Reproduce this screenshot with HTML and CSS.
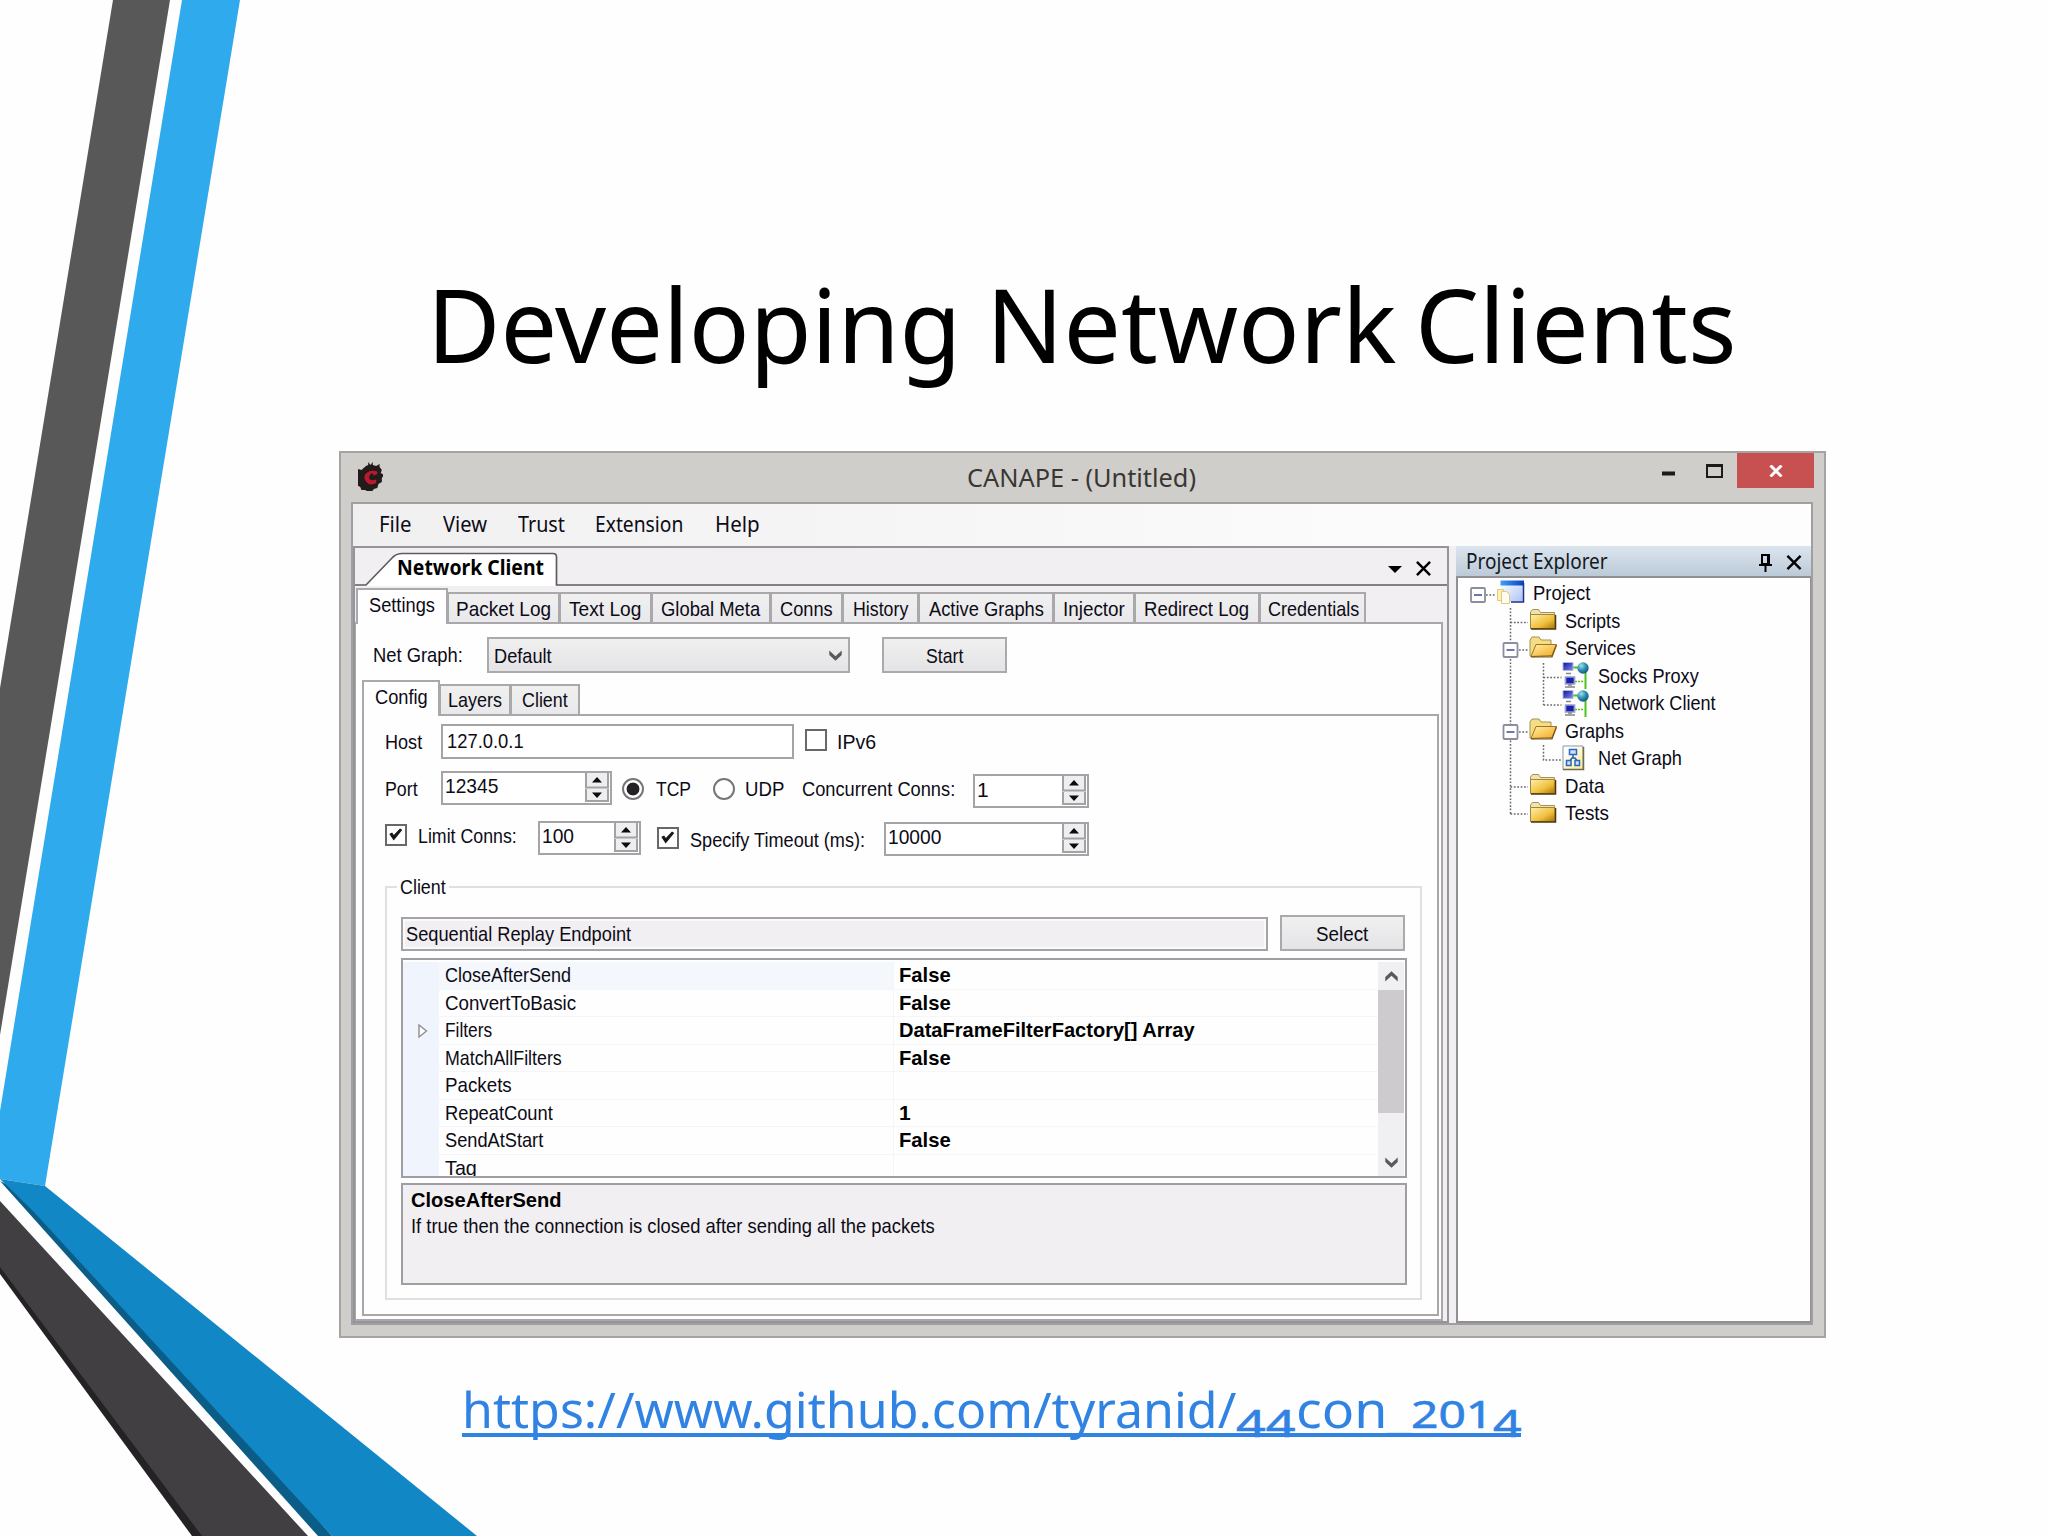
FILE: index.html
```html
<!DOCTYPE html>
<html lang="en">
<head>
<meta charset="utf-8">
<title>Developing Network Clients</title>
<link rel="stylesheet" href="styles.css">
</head>
<body>
<svg class="symbols" width="0" height="0">
  <defs>
    <linearGradient id="gold" x1="0" y1="0" x2="1" y2="1"><stop offset="0" stop-color="#fff0b0"/><stop offset=".6" stop-color="#efbf3c"/><stop offset="1" stop-color="#a8740c"/></linearGradient>
    <linearGradient id="flap" x1="0" y1="0" x2="1" y2="1"><stop offset="0" stop-color="#fff0a8"/><stop offset="1" stop-color="#f3a81c"/></linearGradient>
    <linearGradient id="sky" x1="0" y1="0" x2="1" y2="1"><stop offset="0" stop-color="#fff"/><stop offset="1" stop-color="#a9c2f5"/></linearGradient>
    <linearGradient id="cream" x1="0" y1="0" x2="1" y2="1"><stop offset=".2" stop-color="#fff"/><stop offset="1" stop-color="#ffe98a"/></linearGradient>
    <linearGradient id="bar" x1="0" y1="0" x2="1" y2="0"><stop offset="0" stop-color="#3fa0f5"/><stop offset="1" stop-color="#0a3fc0"/></linearGradient>
    <radialGradient id="globe" cx=".35" cy=".3" r=".8"><stop offset="0" stop-color="#9fe0ea"/><stop offset=".5" stop-color="#2f8fae"/><stop offset="1" stop-color="#0b4a86"/></radialGradient>
    <linearGradient id="screen" x1="0" y1="0" x2="1" y2="1"><stop offset="0" stop-color="#0a10a0"/><stop offset="1" stop-color="#7f90f0"/></linearGradient>
  </defs>
  <symbol id="i-folder" viewBox="0 0 28 24"><path d="M1.500 21V4l2-2.500h6l2 3h14V7H1.500" fill="#efe3b0" stroke="#a49259"/><path d="M1.500 6.500H26v14H1.500z" fill="url(#gold)" stroke="#a8862f"/><path d="M2 21h24.500V7" fill="none" stroke="#4a360c" stroke-width="1.500"/></symbol>
  <symbol id="i-open" viewBox="0 0 28 24"><path d="M1 20V4l2-3h7l2 3h10v7L5 21z" fill="#f5dd83" stroke="#a49259"/><path d="M7 8.500H27.500L23 19.500 2 20.500z" fill="url(#flap)" stroke="#9a7427"/><path d="M2 20.800h21L27.500 9" fill="none" stroke="#7a5813" stroke-width="1.300"/></symbol>
  <symbol id="i-project" viewBox="0 0 28 25"><path d="M4.500 1.500h22v20h-22z" fill="url(#sky)"/><path d="M3.500.5H27v5H3.500z" fill="url(#bar)"/><path d="M26.500 3v19H14" fill="none" stroke="#1f2f8c" stroke-width="1.500"/><path d="M.5 9.500h6v11h-6z" fill="#fff1b4" stroke="#e2c980"/><path d="M4.500 11.500h5l3 3v9h-8z" fill="#fffdf0" stroke="#e2c980"/></symbol>
  <symbol id="i-net" viewBox="0 0 28 28"><path d="M11 6.500h12M23.500 6v22" stroke="#4cc417" stroke-width="2" fill="none"/><path d="M13 20.500h9" stroke="#4cc417" stroke-width="1.500" stroke-dasharray="2 1"/><path d="M1 1.500h10v8H1z" fill="url(#screen)" stroke="#b4b8dc"/><path d="M4 12.500h5" stroke="#888" stroke-width="1.500"/><path d="M3.500 16h9v7h-9z" fill="#1622b4" stroke="#9a9fc8" stroke-width="1.700"/><path d="M3 26h10M6 24h4" stroke="#858585" stroke-width="1.700"/><circle cx="21" cy="7" r="5.700" fill="url(#globe)"/></symbol>
  <symbol id="i-graph" viewBox="0 0 28 26"><path d="M1 1h20v23.500H1z" fill="url(#cream)" stroke="#8b97a8"/><path d="M1 24.500h20.500V2" fill="none" stroke="#6d6a4d" stroke-width="1.500"/><path d="M11 9v4M7 17l3-4h3l3 4" fill="none" stroke="#2a5fae" stroke-width="1.500"/><path d="M7.500 4.500h7v5h-7zM4.500 15.500h4.500v5H4.500zM13 15.500h4.500v5H13z" fill="#c9e0ff" stroke="#2a66c2" stroke-width="1.500"/></symbol>
  <symbol id="i-check" viewBox="0 0 22 22"><path d="M4.500 10l4 6L17 5.500l-1.500-1-7 7.500-2-3z" fill="#161616" stroke="#161616" stroke-width="1.200"/></symbol>
  <symbol id="i-down" viewBox="0 0 13 11"><path d="M.3.500l6.200 5.700L12.700.500V5l-6.200 5.800L.3 5z" fill="#5b595b"/></symbol>
  <symbol id="i-x" viewBox="0 0 16 16"><path d="M1 1l14 14M15 1L1 15" fill="none" stroke="currentColor" stroke-width="2.600"/></symbol>
  <symbol id="i-spin" viewBox="0 0 24 29"><path d="M0 0h24v29H0z" fill="#eeedef"/><path d="M1 0v28h22V0M1 14.500h22" fill="none" stroke="#a3a1a4" stroke-width="2"/><path d="M0 15.500h24" stroke="#c9c8ca"/><path d="M12 4l5 5.500H7zM12 25l5-5.500H7z" fill="#0c0c0c"/></symbol>
</svg>

<main class="slide">
  <svg class="ribbon" viewBox="0 0 480 1536" width="480" height="1536">
    <path d="M113 0h57L0 1035V688z" fill="#585858"/>
    <path d="M182 0h58L45 1186 0 1179v-68z" fill="#2fabed"/>
    <path d="M0 1181l40 20L332 1536h-14z" fill="#0b5d87"/>
    <path d="M0 1179l45 7 432 350H332L33 1211z" fill="#1287c5"/>
    <path d="M0 1265l60 60 145 211h-13L0 1274z" fill="#242224"/>
    <path d="M0 1201l308 335H202L0 1267z" fill="#413f41"/>
  </svg>

  <h1 class="title"><span class="t" data-w="534">Developing</span><span class="t" data-w="410">Network</span><span class="t" data-w="322">Clients</span></h1>

  <section class="window">
    <header class="titlebar">
      <svg class="logo" viewBox="1 0 22 29" width="25" height="29" preserveAspectRatio="none"><path d="M8 4l2-1V0l2 3 2-3v3l3 1 3-2v3l2 3-1 3 3 2-2 3v4l-3 2-1 4-3 1-2 3-4-1-2-1-3 0-1-3-3-2 1-3-3-2 2-3-2-3 3-2V7l3 1z" fill="#231b1b"/><path d="M18 12V9.500Q12 7.500 8.500 11t-.5 8.500 9 1.500v-3.500q-4 1.500-5.500 0t0-4.500 3-.5v1z" fill="#b81c2c"/></svg>
      <span class="caption"><span class="t" data-w="229">CANAPE - (Untitled)</span></span>
      <svg class="winbtn" viewBox="0 0 70 36" width="70" height="36"><path d="M1 20.500h13" stroke="#1c1b1a" stroke-width="4"/><path d="M46 12h15v12H46z" fill="none" stroke="#1c1b1a" stroke-width="2"/><path d="M45 12.500h17" stroke="#1c1b1a" stroke-width="3"/></svg>
      <span class="close"><svg viewBox="0 0 14 12" width="14" height="12"><path d="M1.500.500l11 11M12.500.500l-11 11" stroke="#fff" stroke-width="3"/></svg></span>
    </header>

    <div class="client">
      <nav class="menu">
        <span class="t" data-w="33">File</span><span class="t" data-w="44">View</span><span class="t" data-w="47">Trust</span><span class="t" data-w="88">Extension</span><span class="t" data-w="45">Help</span>
      </nav>
      <div class="panes">
        <section class="doc">
          <div class="docstrip">
            <svg class="doctab" viewBox="0 0 1092 38" width="1092" height="38"><path d="M10 38L38 9q4-3.500 9-3.500h151q3.500 0 3.500 3.500v29z" fill="#fff"/><path d="M0 37h11L38 9q4-3.500 9-3.500h151q3.500 0 3.500 3.500v28H1092" fill="none" stroke="#5f5c60" stroke-width="1.700"/></svg>
            <b class="doctitle"><span class="t" data-w="147">Network Client</span></b>
            <svg class="dropmark" viewBox="0 0 14 7" width="14" height="7"><path d="M0 0h14L7 7z" fill="#000"/></svg>
            <svg class="docx" width="15" height="15"><use href="#i-x"/></svg>
          </div>

          <div class="tabs main-tabs">
            <span class="tab on"><span class="t" data-w="66">Settings</span></span>
            <span class="tab"><span class="t" data-w="95">Packet Log</span></span>
            <span class="tab"><span class="t" data-w="72">Text Log</span></span>
            <span class="tab"><span class="t" data-w="99">Global Meta</span></span>
            <span class="tab"><span class="t" data-w="53">Conns</span></span>
            <span class="tab"><span class="t" data-w="55">History</span></span>
            <span class="tab"><span class="t" data-w="115">Active Graphs</span></span>
            <span class="tab"><span class="t" data-w="62">Injector</span></span>
            <span class="tab"><span class="t" data-w="105">Redirect Log</span></span>
            <span class="tab"><span class="t" data-w="91">Credentials</span></span>
          </div>

          <div class="page">
            <div class="graphrow">
              <span class="t" data-w="90">Net Graph:</span>
              <span class="combo"><span class="t" data-w="58">Default</span><svg width="13" height="11"><use href="#i-down"/></svg></span>
              <span class="button"><span class="t" data-w="37">Start</span></span>
            </div>

            <div class="tabs sub-tabs">
              <span class="tab on"><span class="t" data-w="53">Config</span></span>
              <span class="tab"><span class="t" data-w="54">Layers</span></span>
              <span class="tab"><span class="t" data-w="46">Client</span></span>
            </div>

            <div class="config">
              <div class="hostrow">
                <span class="t" data-w="37">Host</span>
                <span class="field"><span class="t" data-w="77">127.0.0.1</span></span>
                <span class="check"></span>
                <span class="t" data-w="39">IPv6</span>
              </div>
              <div class="portrow">
                <span class="t" data-w="33">Port</span>
                <span class="field spin"><span class="t" data-w="53">12345</span><svg width="24" height="29"><use href="#i-spin"/></svg></span>
                <span class="radio picked"></span>
                <span class="t" data-w="35">TCP</span>
                <span class="radio"></span>
                <span class="t" data-w="39">UDP</span>
                <span class="t" data-w="153">Concurrent Conns:</span>
                <span class="field spin low"><span class="t">1</span><svg width="24" height="29"><use href="#i-spin"/></svg></span>
              </div>
              <div class="limitrow">
                <span class="check"><svg width="20" height="20"><use href="#i-check"/></svg></span>
                <span class="t" data-w="99">Limit Conns:</span>
                <span class="field spin"><span class="t" data-w="32">100</span><svg width="24" height="29"><use href="#i-spin"/></svg></span>
                <span class="check second"><svg width="20" height="20"><use href="#i-check"/></svg></span>
                <span class="t second" data-w="175">Specify Timeout (ms):</span>
                <span class="field spin timeout"><span class="t" data-w="53">10000</span><svg width="24" height="29"><use href="#i-spin"/></svg></span>
              </div>

              <fieldset class="group">
                <legend><span class="t" data-w="46">Client</span></legend>
                <div class="endpoint">
                  <span class="field readonly"><span class="t" data-w="225">Sequential Replay Endpoint</span></span>
                  <span class="button"><span class="t" data-w="52">Select</span></span>
                </div>
                <div class="props">
                  <div class="rows">
                    <div class="prop sel"><i></i><span><span class="t" data-w="126">CloseAfterSend</span></span><b><span class="t" data-w="52">False</span></b></div>
                    <div class="prop"><i></i><span><span class="t" data-w="131">ConvertToBasic</span></span><b><span class="t" data-w="52">False</span></b></div>
                    <div class="prop"><i><svg width="10" height="14" viewBox="0 0 10 14"><path d="M1 1l7.500 6L1 13z" fill="#fff" stroke="#8e8e90" stroke-width="1.400"/></svg></i><span><span class="t" data-w="47">Filters</span></span><b><span class="t" data-w="296">DataFrameFilterFactory[] Array</span></b></div>
                    <div class="prop"><i></i><span><span class="t" data-w="117">MatchAllFilters</span></span><b><span class="t" data-w="52">False</span></b></div>
                    <div class="prop"><i></i><span><span class="t" data-w="67">Packets</span></span><b></b></div>
                    <div class="prop"><i></i><span><span class="t" data-w="108">RepeatCount</span></span><b><span class="t">1</span></b></div>
                    <div class="prop"><i></i><span><span class="t" data-w="98">SendAtStart</span></span><b><span class="t" data-w="52">False</span></b></div>
                    <div class="prop"><i></i><span><span class="t" data-w="32">Tag</span></span><b></b></div>
                  </div>
                  <div class="scroll">
                    <svg class="flip" width="13" height="11"><use href="#i-down"/></svg>
                    <span class="thumb"></span>
                    <svg width="13" height="11"><use href="#i-down"/></svg>
                  </div>
                </div>
                <div class="help">
                  <b><span class="t" data-w="151">CloseAfterSend</span></b>
                  <span class="t" data-w="524">If true then the connection is closed after sending all the packets</span>
                </div>
              </fieldset>
            </div>
          </div>
        </section>

        <aside class="explorer">
          <header class="exhead">
            <span class="t" data-w="142">Project Explorer</span>
            <svg class="pin" viewBox="0 0 13 18" width="13" height="18"><path d="M3 1h7v9H3z" fill="none" stroke="#000" stroke-width="2"/><path d="M8 0h3v10H8z"/><path d="M0 10h13v2H0zM5.500 12h2v6h-2z"/></svg>
            <svg width="16" height="15"><use href="#i-x"/></svg>
          </header>
          <div class="tree">
            <svg class="lines" width="120" height="250" viewBox="0 0 120 250"><g fill="none" stroke="#66646c" stroke-width="1.500" stroke-dasharray="1.700 1.700"><path d="M29 17h10M53.500 30v206M53.500 44.500H71M62 72h9M53.500 209H71M53.500 236H71M86.500 85v42M86.500 99.500h18M86.500 127h18M62 154h9M86.500 167v15h18"/></g><g fill="#fff" stroke="#8b8e9c" stroke-width="1.800"><rect x="14" y="10" width="14" height="14" rx="1"/><rect x="46.500" y="65" width="14" height="14" rx="1"/><rect x="46.500" y="147" width="14" height="14" rx="1"/></g><path d="M17 17h8M49.500 72h8M49.500 154h8" stroke="#3b4a9c" stroke-width="1.600"/></svg>
            <div class="node l0"><svg width="28" height="25"><use href="#i-project"/></svg><span class="t" data-w="57">Project</span></div>
            <div class="node l1"><svg width="28" height="24"><use href="#i-folder"/></svg><span class="t" data-w="55">Scripts</span></div>
            <div class="node l1"><svg width="28" height="24"><use href="#i-open"/></svg><span class="t" data-w="71">Services</span></div>
            <div class="node l2"><svg width="28" height="28"><use href="#i-net"/></svg><span class="t" data-w="101">Socks Proxy</span></div>
            <div class="node l2"><svg width="28" height="28"><use href="#i-net"/></svg><span class="t" data-w="118">Network Client</span></div>
            <div class="node l1"><svg width="28" height="24"><use href="#i-open"/></svg><span class="t" data-w="59">Graphs</span></div>
            <div class="node l2"><svg width="28" height="26"><use href="#i-graph"/></svg><span class="t" data-w="84">Net Graph</span></div>
            <div class="node l1"><svg width="28" height="24"><use href="#i-folder"/></svg><span class="t" data-w="39">Data</span></div>
            <div class="node l1"><svg width="28" height="24"><use href="#i-folder"/></svg><span class="t" data-w="44">Tests</span></div>
          </div>
        </aside>
      </div>
    </div>
  </section>

  <a class="link"><span class="t" data-w="774">https://www.github.com/tyranid/</span><span class="t old drop" data-w="59">44</span><span class="t" data-w="115">con_</span><span class="t old" data-w="82">201</span><span class="t old drop" data-w="29">4</span></a>
</main>
<script src="fit.js"></script>
</body>
</html>
```
FILE: styles.css
```css
* { box-sizing: border-box; }
body {
  margin: 0;
  background: #fefefe;
  font: 21px/26px "Liberation Sans", Arial, sans-serif;
  color: #0d0b16;
}
svg { display: block; flex: none; }
.symbols { position: absolute; }
.t {
  display: inline-block;
  width: max-content;
  white-space: pre;
  transform-origin: 0 50%;
}

.slide {
  position: relative;
  width: 2048px;
  height: 1536px;
  overflow: hidden;
  padding: 255px 0 0 339px;
}
.ribbon { position: absolute; left: 0; top: 0; }

.title {
  display: flex;
  margin: 0 0 48px 88px;
  gap: 25px;
  height: 148px;
  font: 400 103px/136px "Noto Sans", "Open Sans", sans-serif;
  color: #000;
}
.title .t:nth-child(3) { margin-left: -7px; }

/* application window */
.window {
  width: 1487px;
  height: 887px;
  background: #d0cecb;
  border: 2px solid #a6a4a2;
}
.titlebar {
  display: grid;
  grid-template-columns: 17px 25px 584px 694px 76px 77px;
  height: 49px;
  align-items: start;
}
.logo { grid-column: 2; margin-top: 9px; }
.caption {
  grid-column: 4;
  font: 26px/48px "Noto Sans", sans-serif;
  color: #3a3733;
}
.close {
  display: flex;
  height: 35px;
  align-items: center;
  justify-content: center;
  background: #c75050;
}
.client {
  width: 1462px;
  height: 823px;
  margin-left: 10px;
  border: 2px solid #a09ea0;
  background: #f1eff1;
}
.menu {
  display: flex;
  height: 42px;
  padding-left: 26px;
  gap: 31px;
  font: 21px/41px "Noto Sans", sans-serif;
  background: linear-gradient(90deg, #f1f0f0, #fdfdfd 85%);
}
.panes { display: flex; gap: 7px; height: 777px; }

/* document pane */
.doc { width: 1096px; border: 2px solid #969498; }
.docstrip {
  display: grid;
  grid-template-columns: 42px 991px 28px 15px;
  align-items: center;
  height: 38px;
}
.doctab { grid-area: 1 / 1; }
.doctitle {
  grid-area: 1 / 2;
  font: bold 21px/36px "Noto Sans", sans-serif;
  color: #000;
}
.dropmark { grid-area: 1 / 3; margin-top: 5px; }
.docx { grid-area: 1 / 4; margin-top: 2px; color: #000; }
.docx use, .exhead use { width: 15px; height: 15px; }

.tabs { display: grid; align-items: end; }
.main-tabs {
  grid-template-columns: 92px 112px 92px 119px 72px 76px 135px 81px 125px 106px;
  height: 36px;
  padding-left: 1px;
}
.sub-tabs {
  grid-template-columns: 78px 71px 69px;
  height: 34px;
  margin-top: 8px;
  padding-left: 6px;
}
.tab {
  display: flex;
  justify-content: center;
  height: 30px;
  line-height: 29px;
  border: 2px solid #aaa8aa;
  border-width: 2px 2px 0 1px;
  background: linear-gradient(#f1f0f1, #e9e8ea);
}
.sub-tabs .tab { line-height: 28px; }
.tab.on {
  height: 36px;
  margin-bottom: -2px;
  border-width: 2px 2px 0;
  line-height: 30px;
  background: #fefefe;
  z-index: 1;
}
.main-tabs .tab:last-child { padding-left: 3px; }
.page {
  width: 1088px;
  height: 699px;
  background: #fefefe;
  border: 2px solid #a9a7a9;
  border-width: 2px 2px 2px 1px;
}
.graphrow {
  display: grid;
  grid-template-columns: 114px 363px 125px;
  height: 48px;
  padding: 13px 0 0 17px;
  line-height: 36px;
}
.graphrow .button { margin-left: 32px; width: 125px; }
.combo, .button {
  display: flex;
  align-items: center;
  height: 36px;
  border: 2px solid #aba9ab;
  background: linear-gradient(#f1f0f1, #e4e3e5);
  line-height: 33px;
}
.combo { justify-content: space-between; padding: 0 6px 0 5px; }
.button { justify-content: center; }

.config {
  width: 1077px;
  height: 602px;
  margin-left: 6px;
  padding: 8px 0 0 21px;
  border: 2px solid #a9a7a9;
}
.hostrow, .portrow, .limitrow { display: grid; align-items: start; line-height: 35px; }
.hostrow { grid-template-columns: 56px 353px 43px auto; height: 47px; }
.portrow { grid-template-columns: 56px 171px 44px 56px 33px 57px 171px 116px; height: 50px; }
.limitrow { grid-template-columns: 33px 120px 103px 48px 195px 205px; height: 53px; }
.field {
  display: flex;
  justify-content: space-between;
  height: 35px;
  padding-left: 3px;
  line-height: 30px;
  border: 2px solid #a5a3a7;
  background: #fff;
}
.hostrow .field { padding-left: 4px; line-height: 30px; }
.spin { height: 34px; padding-right: 1px; line-height: 26px; }
.spin .t { margin-left: -1px; }
.spin.low { margin-top: 3px; line-height: 27px; }
.limitrow .spin { line-height: 26px; }
.check {
  width: 22px;
  height: 22px;
  border: 2px solid #69676b;
  background: #fefefe;
}
.check svg { margin: -1px; }
.hostrow .check { margin: 5px 0 0 11px; }
.limitrow .check { margin-top: 3px; }
.limitrow > .t { line-height: 30px; }
.limitrow .check.second { margin: 6px 0 0 16px; }
.limitrow .t.second { line-height: 37px; margin-left: 1px; }
.timeout { margin-top: 1px; }
.radio {
  width: 22px;
  height: 22px;
  margin-top: 7px;
  border: 2px solid #77757a;
  border-radius: 50%;
  background: #fff;
}
.portrow .radio:nth-child(3) { margin-left: 10px; }
.portrow .radio:nth-child(5) { margin-left: 1px; }
.portrow > .t { line-height: 36px; }
.picked { background: radial-gradient(circle, #232124 0 6px, #fff 6.8px); }

.group {
  width: 1037px;
  height: 426px;
  margin: 0;
  padding: 0 0 0 10px;
  border: 2px solid #e0dfe1;
}
.group legend { height: 26px; width: 52px; padding: 0 0 0 3px; }
.endpoint {
  display: flex;
  align-items: end;
  gap: 12px;
  margin: 15px 0 7px 4px;
}
.endpoint .button { width: 125px; }
.readonly { width: 867px; height: 34px; padding-left: 3px; background: #f1eff1; box-shadow: inset 0 0 0 2px #fafafa; line-height: 30px; }
.props {
  display: flex;
  width: 1006px;
  height: 220px;
  margin: 0 0 5px 4px;
  padding: 2px 1px 0 0;
  border: 2px solid #a09ea2;
  background: #fefefe;
}
.rows { width: 975px; overflow: hidden; }
.prop { display: grid; grid-template-columns: 36px 455px 484px; height: 27.5px; line-height: 25px; }
.prop i { background: #f0f5fd; padding: 7px 0 0 15px; }
.prop > span { padding-left: 6px; border: 1px solid #f4f5fa; border-width: 0 1px 1px 0; }
.prop > b { padding-left: 5px; color: #000; border-bottom: 1px solid #f6f6f9; }
.sel > span { background: #f4f7fc; }
.scroll {
  display: flex;
  flex-direction: column;
  align-items: center;
  width: 26px;
  background: #f0eff1;
  padding-top: 9px;
}
.scroll .flip { transform: scaleY(-1); }
.thumb { width: 26px; height: 123px; margin: 8px 0 44px; background: #cdcbcd; }
.help {
  width: 1006px;
  height: 102px;
  margin-left: 4px;
  padding: 1px 0 0 8px;
  border: 2px solid #a09ea2;
  background: #f1eff1;
}
.help b { display: block; height: 27px; line-height: 28px; color: #000; }

/* project explorer */
.explorer { width: 355px; }
.exhead {
  display: grid;
  grid-template-columns: 293px 27px 16px;
  align-items: center;
  height: 30px;
  padding-left: 10px;
  font: 21px/30px "Noto Sans", sans-serif;
  background: linear-gradient(#dbe5ee, #bccad8);
  color: #14181f;
}
.exhead svg { color: #000; margin-top: 3px; }
.tree {
  position: relative;
  height: 747px;
  padding-top: 1px;
  border: 2px solid #918f94;
  border-right-width: 1px;
  background: #fefefe;
}
.lines { position: absolute; left: -1px; top: 0; }
.node { position: relative; display: flex; align-items: center; gap: 8px; height: 27.5px; line-height: 27px; }
.l0 { padding-left: 39px; }
.l1 { padding-left: 71px; }
.l2 { padding-left: 104px; }

.link {
  display: flex;
  align-items: baseline;
  width: 1059px;
  height: 68px;
  margin: 37px 0 0 123px;
  font: 50px/68px "Noto Sans", sans-serif;
  color: #3083e3;
  background: linear-gradient(#3083e3, #3083e3) 0 58px / 100% 4px no-repeat;
}
.old { font-size: 38px; -webkit-text-stroke: 0.6px #3083e3; }
.drop { position: relative; top: 9px; }
```
FILE: fit.js
```js
// Condense each label to the width given in its data-w attribute.
document.querySelectorAll('.t[data-w]').forEach(function (el) {
  var natural = el.offsetWidth;
  var wanted = Number(el.dataset.w);
  var after = parseFloat(getComputedStyle(el).marginRight) || 0;
  el.style.transform = 'scaleX(' + (wanted / natural) + ')';
  el.style.marginRight = (after + wanted - natural) + 'px';
});
```
